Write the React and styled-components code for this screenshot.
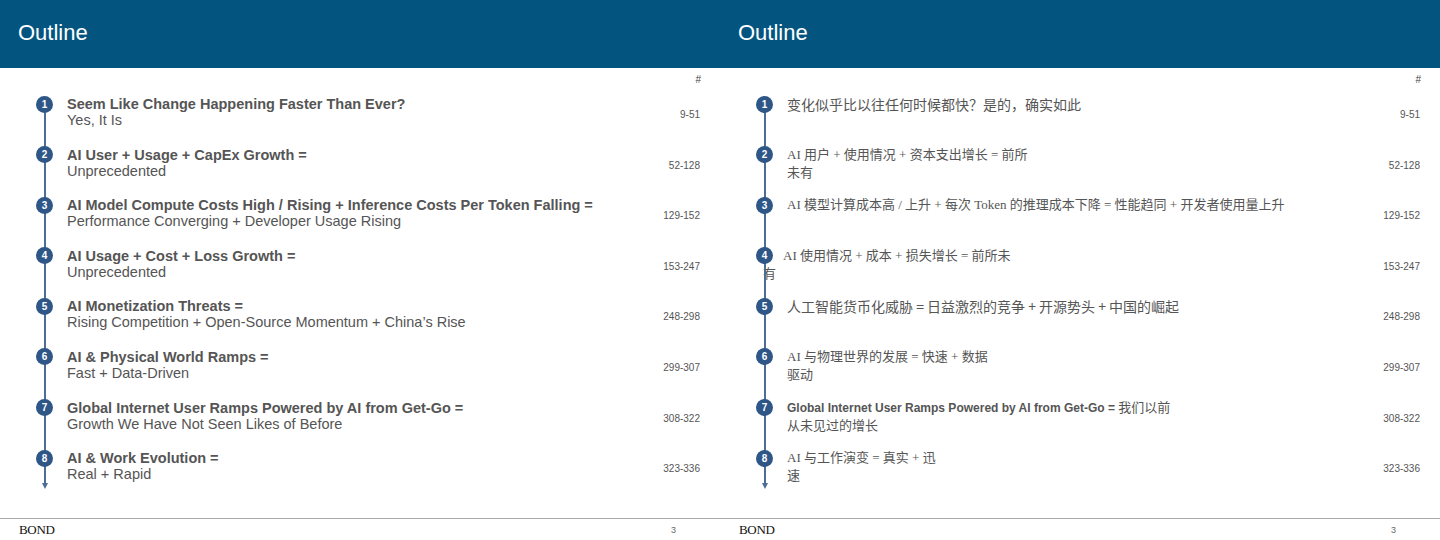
import React from 'react'
import styled, { createGlobalStyle } from 'styled-components'

const Global = createGlobalStyle`
  body { margin: 0; background: #fff; font-family: "Liberation Sans", Arial, sans-serif; }
`

const en = [
  ['Seem Like Change Happening Faster Than Ever?', 'Yes, It Is', '9-51'],
  ['AI User + Usage + CapEx Growth =', 'Unprecedented', '52-128'],
  ['AI Model Compute Costs High / Rising + Inference Costs Per Token Falling =', 'Performance Converging + Developer Usage Rising', '129-152'],
  ['AI Usage + Cost + Loss Growth =', 'Unprecedented', '153-247'],
  ['AI Monetization Threats =', 'Rising Competition + Open-Source Momentum + China\u2019s Rise', '248-298'],
  ['AI & Physical World Ramps =', 'Fast + Data-Driven', '299-307'],
  ['Global Internet User Ramps Powered by AI from Get-Go =', 'Growth We Have Not Seen Likes of Before', '308-322'],
  ['AI & Work Evolution =', 'Real + Rapid', '323-336'],
]

const zh = [
  ['变化似乎比以往任何时候都快？是的，确实如此', '', '9-51', 'sans'],
  ['AI 用户 + 使用情况 + 资本支出增长 = 前所', '未有', '52-128', 'serif'],
  ['AI 模型计算成本高 / 上升 + 每次 Token 的推理成本下降 = 性能趋同 + 开发者使用量上升', '', '129-152', 'serif'],
  ['AI 使用情况 + 成本 + 损失增长 = 前所未', '有', '153-247', 'serif', true],
  ['人工智能货币化威胁 = 日益激烈的竞争 + 开源势头 + 中国的崛起', '', '248-298', 'sans'],
  ['AI 与物理世界的发展 = 快速 + 数据', '驱动', '299-307', 'serif'],
  ['Global Internet User Ramps Powered by AI from Get-Go = 我们以前', '从未见过的增长', '308-322', 'mixed'],
  ['AI 与工作演变 = 真实 + 迅', '速', '323-336', 'serif'],
]

const Page = styled.div`
  display: flex;
  width: 1440px;
  height: 540px;
  overflow: hidden;
`

const Slide = styled.div`
  width: 720px;
  height: 540px;
  display: flex;
  flex-direction: column;
`

const Header = styled.div`
  height: 68px;
  background: #03557f;
  color: #fff;
  font-size: 22px;
  padding-left: 18px;
  display: flex;
  align-items: center;
  box-sizing: border-box;
  padding-bottom: 2px;
`

const Body = styled.div`
  flex: 1;
  padding: 6px 20px 0 36px;
`

const Hash = styled.div`
  text-align: right;
  font-size: 10px;
  color: #444;
  height: 22px;
  padding-right: 0;
  margin-right: -1px;
`

const List = styled.div`
  position: relative;
  &::before {
    content: '';
    position: absolute;
    left: 8px;
    top: 8px;
    height: 382px;
    width: 1.5px;
    background: #4d6d93;
  }
  &::after {
    content: '';
    position: absolute;
    left: 5.5px;
    top: 387px;
    border-left: 3px solid transparent;
    border-right: 3px solid transparent;
    border-top: 6px solid #4d6d93;
  }
`

const Row = styled.div`
  display: grid;
  grid-template-columns: 31px 1fr 70px;
  height: 50.6px;
  align-items: start;
`

const Dot = styled.div`
  position: relative;
  z-index: 1;
  width: 17px;
  height: 17px;
  border-radius: 50%;
  background: #2e5687;
  color: #fff;
  font-size: 10px;
  font-weight: bold;
  display: flex;
  align-items: center;
  justify-content: center;
  margin-top: -0.5px;
`

const Text = styled.div`
  color: #555;
  font-size: 14.5px;
  line-height: 16px;
  white-space: nowrap;
`

const Title = styled.div`
  font-weight: bold;
`

const ZhLine = styled.div`
  font-family: ${p => (p.$kind === 'sans' ? '"Noto Sans CJK SC"' : '"Liberation Serif", "Noto Sans CJK SC"')}, sans-serif;
  font-size: ${p => (p.$kind === 'sans' ? '14px' : '13px')};
  line-height: 18px;
  margin-top: -1px;
  margin-left: ${p => (p.$shift ? '-4px' : '0')};
`

const Mixed = styled.span`
  font-family: "Liberation Sans", sans-serif;
  font-weight: bold;
  font-size: 12px;
`

const Wrapped = styled.div`
  font-family: "Liberation Serif", "Noto Sans CJK SC", serif;
  font-size: 13px;
  line-height: 18px;
  margin-left: ${p => (p.$under ? '-24px' : '0')};
`

const Num = styled.div`
  text-align: right;
  font-size: 10px;
  color: #555;
  padding-top: 13px;
`

const Footer = styled.div`
  height: 21px;
  border-top: 1.5px solid #aaa;
  margin-right: 0;
  display: flex;
  justify-content: space-between;
  align-items: center;
  padding: 0 44px 0 19px;
`

const Brand = styled.div`
  font-family: "Liberation Serif", serif;
  font-size: 13px;
  color: #111;
  letter-spacing: -0.3px;
`

const PageNo = styled.div`
  font-size: 9px;
  color: #666;
`

function EnSlide() {
  return (
    <Slide>
      <Header>Outline</Header>
      <Body>
        <Hash>#</Hash>
        <List>
          {en.map(([t, s, n], i) => (
            <Row key={i}>
              <Dot>{i + 1}</Dot>
              <Text>
                <Title>{t}</Title>
                <div>{s}</div>
              </Text>
              <Num>{n}</Num>
            </Row>
          ))}
        </List>
      </Body>
      <Footer>
        <Brand>BOND</Brand>
        <PageNo>3</PageNo>
      </Footer>
    </Slide>
  )
}

function ZhSlide() {
  return (
    <Slide>
      <Header>Outline</Header>
      <Body>
        <Hash>#</Hash>
        <List>
          {zh.map(([t, s, n, k, under], i) => (
            <Row key={i}>
              <Dot>{i + 1}</Dot>
              <Text>
                {k === 'mixed' ? (
                  <ZhLine $kind="serif">
                    <Mixed>Global Internet User Ramps Powered by AI from Get-Go = </Mixed>我们以前
                  </ZhLine>
                ) : (
                  <ZhLine $kind={k} $shift={under}>{t}</ZhLine>
                )}
                {s && <Wrapped $under={under}>{s}</Wrapped>}
              </Text>
              <Num>{n}</Num>
            </Row>
          ))}
        </List>
      </Body>
      <Footer>
        <Brand>BOND</Brand>
        <PageNo>3</PageNo>
      </Footer>
    </Slide>
  )
}

export default function App() {
  return (
    <>
      <Global />
      <Page>
        <EnSlide />
        <ZhSlide />
      </Page>
    </>
  )
}
